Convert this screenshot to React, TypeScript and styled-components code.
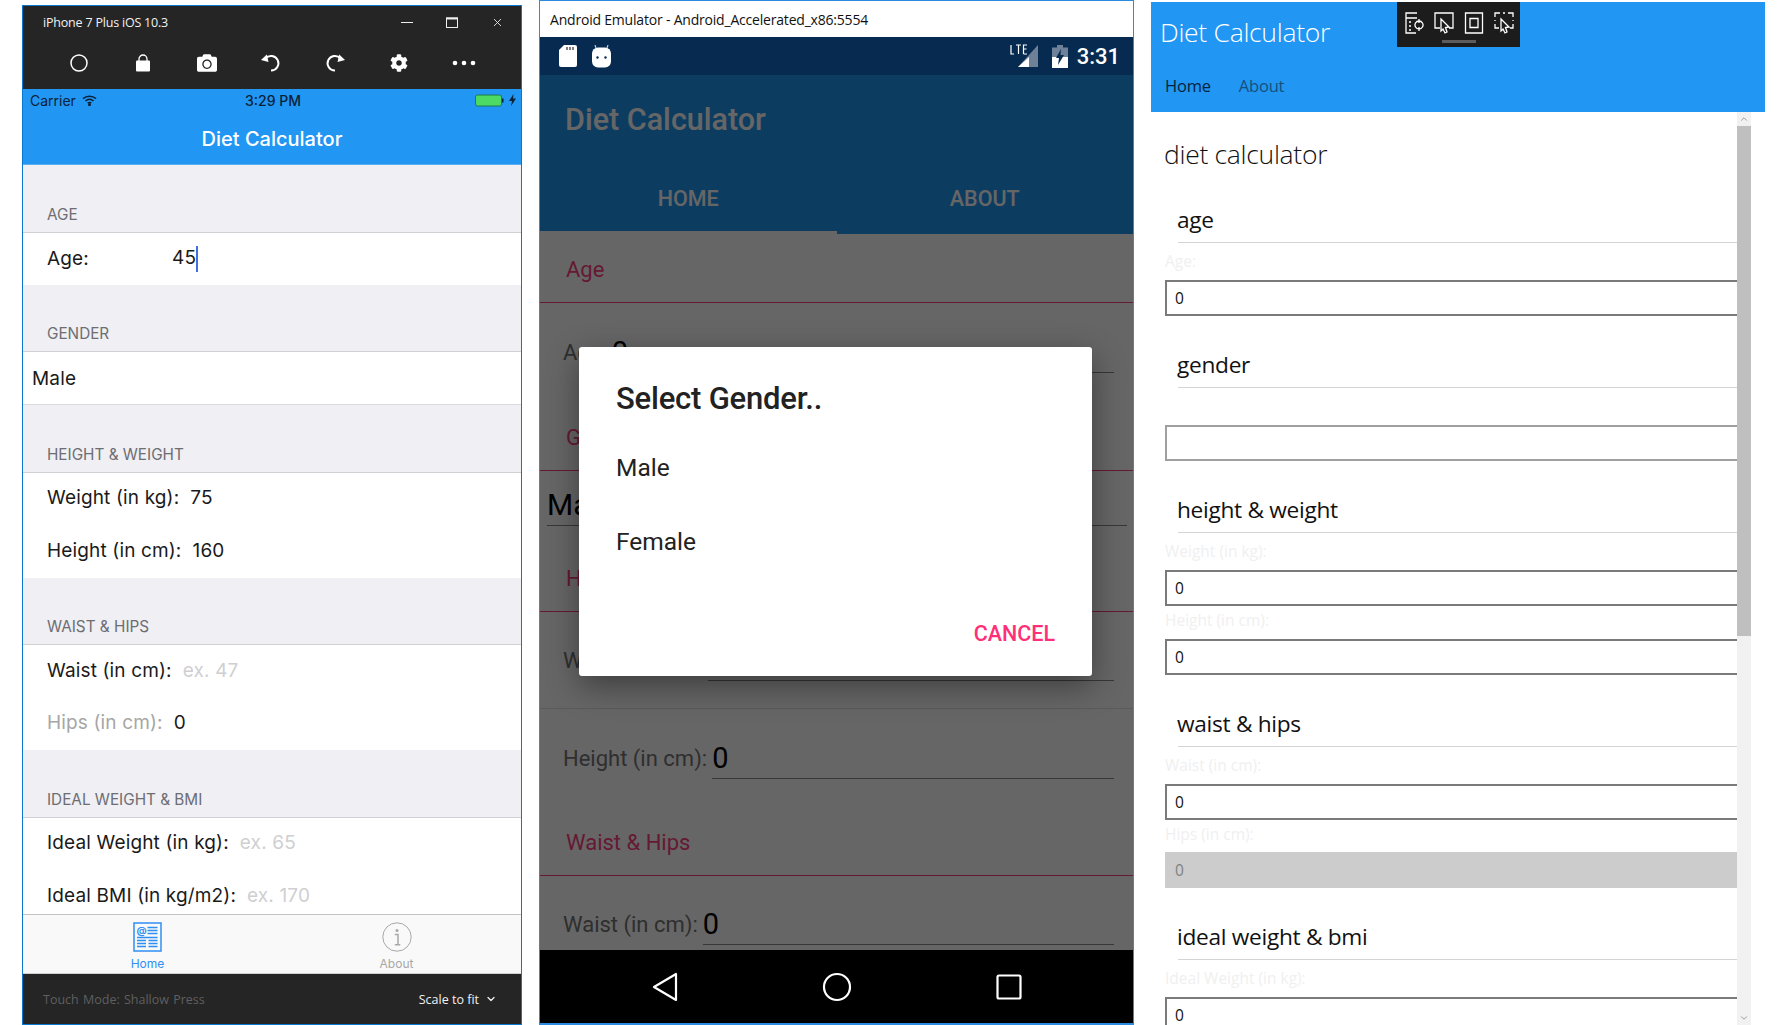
import React from "react";
import styled, { createGlobalStyle } from "styled-components";
import { FaCamera, FaCog } from "react-icons/fa";
import { ChevronDown, ChevronUp, X } from "lucide-react";

const GlobalStyle = createGlobalStyle`
  html, body { margin: 0; padding: 0; background: #fff; }
  * { box-sizing: border-box; }
`;

const Page = styled.div`
  width: 1784px;
  height: 1025px;
  overflow: hidden;
  display: flex;
  padding-left: 22px;
`;

/* ---------- iOS simulator ---------- */
const IosWindow = styled.div`
  width: 500px;
  margin-top: 5px;
  height: 1020px;
  border: 1px solid #0b78d0;
  display: flex;
  flex-direction: column;
  font-family: Inter, "Liberation Sans", sans-serif;
`;
const SimTitle = styled.div`
  background: #252525;
  height: 38px;
  display: flex;
  align-items: center;
  padding: 0 17px 5px 20px;
  color: #f2f2f2;
  font: 12.5px "Open Sans", sans-serif;
`;
const SimTitleText = styled.span`
  flex: 1;
  letter-spacing: -0.2px;
`;
const WinControls = styled.div`
  display: flex;
  align-items: center;
  gap: 33px;
  color: #eee;
`;
const SimTools = styled.div`
  background: #252525;
  height: 45px;
  padding: 0 0 8px 24px;
  display: grid;
  grid-template-columns: repeat(6, 64px) 66px;
  align-items: center;
  justify-items: center;
  color: #fff;
`;
const StatusBar = styled.div`
  background: #2196f3;
  height: 26px;
  display: grid;
  grid-template-columns: 1fr 1fr 1fr;
  align-items: center;
  padding: 0 5px 4px 7px;
  color: #0c2238;
  font-size: 14px;
`;
const StatusLeft = styled.div`
  display: flex;
  align-items: center;
  gap: 6px;
`;
const StatusTime = styled.div`
  text-align: center;
  font-weight: 500;
  font-size: 14px;
`;
const StatusRight = styled.div`
  display: flex;
  justify-content: flex-end;
  align-items: center;
  gap: 4px;
`;
const NavBar = styled.div`
  background: #2196f3;
  height: 50px;
  padding-bottom: 2px;
  display: flex;
  align-items: center;
  justify-content: center;
  color: #fff;
  font-size: 20px;
  font-weight: 500;
  border-bottom: 1px solid #5aaef0;
`;
const IosScroll = styled.div`
  flex: 1;
  min-height: 0;
  overflow: hidden;
  background: #efeff4;
`;
const IosHeader = styled.div`
  height: 67.5px;
  display: flex;
  align-items: flex-end;
  padding: 0 0 8px 24px;
  color: #6d6d72;
  font-size: 15.3px;
  border-bottom: 1px solid #d0d0d4;
`;
const IosRows = styled.div<{ $line?: boolean }>`
  background: #fff;
  border-bottom: ${(p) => (p.$line ? "1px solid #dcdce0" : "0")};
`;
const IosRow = styled.div<{ $h?: number; $inset?: number }>`
  height: ${(p) => p.$h ?? 52}px;
  display: flex;
  align-items: center;
  gap: 11px;
  padding-left: ${(p) => p.$inset ?? 24}px;
  padding-bottom: ${(p) => (p.$h ? 2 : 0)}px;
  font-size: 19px;
  letter-spacing: 0.15px;
  color: #1a1a1a;
`;
const IosLabel = styled.span<{ $w?: number; $muted?: boolean }>`
  width: ${(p) => (p.$w ? `${p.$w}px` : "auto")};
  color: ${(p) => (p.$muted ? "#a6a6a6" : "inherit")};
`;
const Placeholder = styled.span`
  color: #cfcfd2;
`;
const Caret = styled.span`
  display: inline-block;
  width: 2px;
  height: 26px;
  background: #3f6fe0;
  vertical-align: middle;
`;
const TabBar = styled.div`
  flex: none;
  height: 60px;
  background: #f9f9f9;
  border-top: 1px solid #c4c4c4;
  border-bottom: 1px solid #cfcfcf;
  display: grid;
  grid-template-columns: 1fr 1fr;
`;
const TabItem = styled.div<{ $active?: boolean }>`
  display: flex;
  flex-direction: column;
  align-items: center;
  padding-top: 7px;
  gap: 4px;
  font-size: 12px;
  color: ${(p) => (p.$active ? "#2f8ff5" : "#a8a8a8")};
`;
const SimFooter = styled.div`
  flex: none;
  height: 50px;
  background: #252525;
  display: flex;
  align-items: center;
  padding: 0 24px 0 20px;
  font: 12.5px "Open Sans", sans-serif;
  color: #5f5f5f;
`;
const FooterMode = styled.span`
  flex: 1;
  word-spacing: 1px;
`;
const FooterScale = styled.span`
  display: flex;
  align-items: center;
  gap: 6px;
  color: #f2f2f2;
`;

/* ---------- Android emulator ---------- */
const AndroidWindow = styled.div`
  width: 595px;
  margin-left: 17px;
  height: 1025px;
  border: 1px solid #2a8be0;
  border-bottom-width: 2px;
  display: flex;
  flex-direction: column;
  font-family: Roboto, sans-serif;
`;
const EmuTitle = styled.div`
  height: 36px;
  background: #fff;
  flex: none;
  padding: 0 0 0 10px;
  display: flex;
  align-items: center;
  font: 14px "Open Sans", sans-serif;
  letter-spacing: -0.2px;
  color: #111;
`;
const DroidStatus = styled.div`
  height: 38px;
  flex: none;
  background: #072b50;
  color: #fff;
  display: flex;
  align-items: center;
  padding: 0 13px 0 19px;
  gap: 15px;
`;
const DroidClock = styled.span`
  font-size: 22px;
  font-weight: 500;
  margin-left: -6px;
`;
const Spacer = styled.div`
  flex: 1;
`;
const DroidScreen = styled.div`
  position: relative;
  flex: 1;
  min-height: 0;
  overflow: hidden;
  background: #fff;
`;
const Scrim = styled.div`
  position: absolute;
  inset: 0;
  background: rgba(0, 0, 0, 0.6);
`;
const AppBar = styled.div`
  background: #2196f3;
  height: 159px;
  display: flex;
  flex-direction: column;
`;
const AppTitle = styled.div`
  height: 88px;
  padding: 0 0 0 25px;
  display: flex;
  align-items: center;
  color: #fff;
  font-size: 30.5px;
  font-weight: 500;
`;
const AppTabs = styled.div`
  flex: 1;
  display: grid;
  grid-template-columns: 1fr 1fr;
`;
const AppTab = styled.div<{ $active?: boolean }>`
  display: flex;
  align-items: center;
  justify-content: center;
  padding-top: ${(p) => (p.$active ? 3 : 0)}px;
  color: #fff;
  font-size: 21.5px;
  font-weight: 500;
  border-bottom: ${(p) => (p.$active ? "3px solid #fff" : "0")};
`;
const DroidLabel = styled.div<{ $h: number }>`
  height: ${(p) => p.$h}px;
  display: flex;
  align-items: flex-end;
  padding: 0 0 20px 26px;
  color: #ff4081;
  font-size: 22px;
  border-bottom: 1px solid #ff4081;
`;
const DroidRow = styled.div<{ $h?: number }>`
  height: ${(p) => p.$h ?? 75}px;
  display: flex;
  align-items: flex-end;
  padding: 0 19px 6px 23px;
  color: #757575;
  font-size: 22px;
  gap: 5px;
`;
const DroidRowLabel = styled.span`
  padding-bottom: 8px;
`;
const DroidField = styled.div<{ $size?: number }>`
  flex: 1;
  border-bottom: 1px solid #8a8a8a;
  color: #000;
  font-size: ${(p) => p.$size ?? 29}px;
  line-height: 38px;
  height: 40px;
`;
const DroidSeparator = styled.div`
  margin-top: 21px;
  height: 1px;
  background: #e0e0e0;
`;
const MaleRow = styled(DroidRow)`
  padding: 0 6px 6px 7px;
`;
const Dialog = styled.div`
  position: absolute;
  left: 39px;
  top: 272px;
  width: 513px;
  height: 329px;
  background: #fff;
  border-radius: 3px;
  box-shadow: 0 10px 32px rgba(0, 0, 0, 0.4);
  padding: 32px 37px 0 37px;
  display: flex;
  flex-direction: column;
  color: #222;
`;
const DialogTitle = styled.div`
  font-size: 31px;
  font-weight: 500;
  height: 38px;
  line-height: 40px;
  letter-spacing: -0.2px;
`;
const DialogOption = styled.div`
  height: 74px;
  display: flex;
  align-items: center;
  font-size: 24.5px;
  position: relative;
  top: 13px;
`;
const DialogActions = styled.div`
  margin-top: auto;
  padding-bottom: 30px;
  text-align: right;
  color: #ff2f78;
  font-size: 21.5px;
  font-weight: 500;
`;
const DroidNav = styled.div`
  height: 73px;
  flex: none;
  background: #000;
  display: grid;
  grid-template-columns: repeat(3, 172px);
  justify-content: center;
  justify-items: center;
  align-items: center;
`;

/* ---------- Windows UWP ---------- */
const UwpWindow = styled.div`
  position: relative;
  width: 614px;
  margin-left: 17px;
  margin-top: 2px;
  height: 1023px;
  display: flex;
  flex-direction: column;
  font-family: "Open Sans", sans-serif;
`;
const UwpHeader = styled.div`
  flex: none;
  height: 110px;
  background: #2196f3;
  padding: 11px 0 0 9px;
`;
const UwpTitle = styled.div`
  color: #fff;
  font-size: 26.5px;
  font-weight: 300;
  line-height: 38px;
  letter-spacing: -0.3px;
`;
const UwpTabs = styled.div`
  display: flex;
  gap: 28px;
  margin-top: 23px;
  padding-left: 5px;
`;
const UwpTab = styled.span<{ $active?: boolean }>`
  font-size: 16.5px;
  letter-spacing: -0.2px;
  color: ${(p) => (p.$active ? "#06233d" : "#164f7e")};
`;
const DevTools = styled.div`
  position: absolute;
  left: 246px;
  top: 0;
  width: 123px;
  height: 45px;
  background: #1c1c1c;
  padding-top: 9px;
  display: flex;
  flex-direction: column;
  align-items: center;
  gap: 5px;
`;
const DevIcons = styled.div`
  display: flex;
  gap: 10px;
`;
const DevHandle = styled.div`
  width: 34px;
  height: 3px;
  background: #5c5c5c;
`;
const UwpBody = styled.div`
  flex: 1;
  min-height: 0;
  display: flex;
  padding-right: 14px;
`;
const UwpContent = styled.div`
  flex: 1;
  min-width: 0;
  overflow: hidden;
  padding-left: 14px;
`;
const UwpPageTitle = styled.div`
  height: 59px;
  padding-top: 24px;
  margin-left: -1px;
  font-size: 26.5px;
  font-weight: 300;
  line-height: 36px;
  color: #111;
  letter-spacing: -0.3px;
`;
const UwpHeading = styled.div`
  height: 72px;
  margin-left: 13px;
  display: flex;
  align-items: flex-end;
  padding: 0 0 7px 0;
  border-bottom: 1px solid #d4d4d4;
  font-size: 22.7px;
  line-height: 30px;
  letter-spacing: -0.3px;
  text-indent: -1px;
  color: #111;
`;
const UwpGap = styled.div`
  height: 37px;
`;
const UwpFieldLabel = styled.div<{ $first?: boolean }>`
  height: ${(p) => (p.$first ? 37 : 32.5)}px;
  padding-top: ${(p) => (p.$first ? 6 : 2)}px;
  line-height: 24px;
  font-size: 15.5px;
  color: #f0f0f0;
`;
const UwpInput = styled.div<{ $disabled?: boolean; $pale?: boolean }>`
  width: calc(100% + 10px);
  height: 36px;
  padding-left: 8px;
  display: flex;
  align-items: center;
  font-size: 15.5px;
  background: ${(p) => (p.$disabled ? "#cccccc" : "#fff")};
  color: ${(p) => (p.$disabled ? "#808080" : "#111")};
  border: 2px solid
    ${(p) => (p.$disabled ? "#cccccc" : p.$pale ? "#a0a0a0" : "#7a7a7a")};
`;
const ScrollTrack = styled.div`
  flex: none;
  width: 14px;
  background: #f1f1f1;
  display: flex;
  flex-direction: column;
  align-items: center;
  color: #8a8a8a;
`;
const ScrollArrow = styled.div`
  flex: none;
  height: 14px;
  display: flex;
  align-items: center;
  justify-content: center;
`;
const ScrollThumb = styled.div`
  flex: none;
  align-self: stretch;
  height: 510px;
  background: #bfbfbf;
`;

const WifiIcon = () => (
  <svg width="15" height="11" viewBox="0 0 15 11" fill="none" stroke="#0c2238" strokeWidth="1.5">
    <path d="M1 3.6C4.7.4 10.3.4 14 3.6" />
    <path d="M3.4 6C5.8 4 9.2 4 11.6 6" />
    <path d="M5.7 8.2C6.8 7.3 8.2 7.3 9.3 8.2" />
    <circle cx="7.5" cy="9.8" r=".7" fill="#0c2238" />
  </svg>
);

const BatteryIcon = () => (
  <svg width="30" height="13" viewBox="0 0 30 13">
    <rect x=".5" y="1" width="26" height="11" rx="2" fill="#4cd964" stroke="#1f7a50" />
    <rect x="27" y="4.5" width="1.5" height="4" fill="#0c2238" />
  </svg>
);

const BoltIcon = () => (
  <svg width="7" height="12" viewBox="0 0 7 12">
    <path d="M4.5 0 0 7h3l-1 5 5-7.500H4z" fill="#0c2238" />
  </svg>
);

const LockIcon = () => (
  <svg width="16" height="18" viewBox="0 0 16 18" fill="none">
    <path d="M4 7V5a4 4 0 0 1 8 0v2" stroke="#fff" strokeWidth="1.300" />
    <rect x="1" y="6.500" width="14" height="11" rx="1" fill="#fff" />
  </svg>
);

// the simulator's rotate icons: an open ring with a solid arrow head
const RotateIcon = ({ flip }: { flip?: boolean }) => (
  <svg width="20" height="20" viewBox="0 0 20 20" fill="none" style={flip ? { transform: "scaleX(-1)" } : undefined}>
    <path d="M4.500 5.500A7.300 7.300 0 1 1 10 17.500" stroke="#fff" strokeWidth="2" />
    <path d="M0 7 5.800 1.500 7.500 9z" fill="#fff" />
  </svg>
);

const HomeTabIcon = () => (
  <svg width="29" height="30" viewBox="0 0 29 30" fill="none" stroke="#2f8ff5">
    <rect x="1" y="1" width="27" height="28" strokeWidth="1.500" />
    <text x="3.500" y="12" fontSize="10" fill="#2f8ff5" stroke="none" fontFamily="Inter, sans-serif" fontWeight="700">
      @
    </text>
    <path d="M14.500 5.500h10M14.500 8.500h10M14.500 11.500h10M4 15.500h20.500M4 18.500h9M15.500 18.500h9M4 21.500h9M15.500 21.500h9M4 24.500h9M15.500 24.500h9" strokeWidth="1.300" />
  </svg>
);

const AboutTabIcon = () => (
  <svg width="30" height="30" viewBox="0 0 30 30" fill="none" stroke="#a8a8a8">
    <circle cx="15" cy="15" r="14.200" strokeWidth="1" />
    <circle cx="15" cy="8.500" r="1.500" fill="#a8a8a8" stroke="none" />
    <path d="M12.800 12.500H16v10M12.800 22.700h5.500" strokeWidth="1.500" />
  </svg>
);

const SdIcon = () => (
  <svg width="18" height="22" viewBox="0 0 18 22">
    <path d="M5 0h11a2 2 0 0 1 2 2v18a2 2 0 0 1-2 2H2a2 2 0 0 1-2-2V5z" fill="#fff" />
    <path d="M8 2v3M11 2v3M14 2v3" stroke="#555" strokeWidth="1.500" />
  </svg>
);

const BotIcon = () => (
  <svg width="19" height="23" viewBox="0 0 19 23">
    <path d="M4 3 3 0M15 3l1-3" stroke="#ccc" strokeWidth="1.200" />
    <rect y="2.500" width="19" height="20" rx="6" fill="#fff" />
    <circle cx="5.500" cy="12.500" r="1.200" fill="#072b50" />
    <circle cx="13.500" cy="12.500" r="1.200" fill="#072b50" />
  </svg>
);

const LteIcon = () => (
  <svg width="29" height="24" viewBox="0 0 29 24">
    <path d="M28 1v22H8z" fill="#6f8199" />
    <path d="M19 13v10H8z" fill="#fff" />
    <path d="M1 1v9h3M6 1h5M8.500 1v9M13.500 10V1h3.500M13.500 5h3M13.500 10h3.500" stroke="#fff" strokeWidth="1.200" fill="none" />
  </svg>
);

const ChargeIcon = () => (
  <svg width="16" height="23" viewBox="0 0 16 23" style={{ marginLeft: -2 }}>
    <path d="M5 0h6v2.500h5V23H0V2.500h5z" fill="#6f8199" />
    <path d="M0 12h16v11H0z" fill="#fff" />
    <path d="M9 4 4 13h3l-1 7 6-10H8.500z" fill="#072b50" />
  </svg>
);

const DevIcon = ({ d }: { d: string }) => (
  <svg width="20" height="24" viewBox="0 0 20 24" fill="none" stroke="#fff" strokeWidth="1.300">
    <path d={d} />
  </svg>
);

const IosField = ({ label, value, hint, muted }: { label: string; value?: string; hint?: string; muted?: boolean }) => (
  <IosRow $h={52.5}>
    <IosLabel $muted={muted}>{label}</IosLabel>
    {value ? <span>{value}</span> : <Placeholder>{hint}</Placeholder>}
  </IosRow>
);

const UwpField = ({ label, first }: { label: string; first?: boolean }) => (
  <>
    <UwpFieldLabel $first={first}>{label}</UwpFieldLabel>
    <UwpInput>0</UwpInput>
  </>
);

function IosPane() {
  return (
    <IosWindow>
      <SimTitle>
        <SimTitleText>iPhone 7 Plus iOS 10.3</SimTitleText>
        <WinControls>
          <svg width="12" height="2"><rect width="12" height="1" fill="#eee" /></svg>
          <svg width="12" height="11" fill="none" stroke="#eee"><rect x=".5" y="1" width="11" height="9.500" /><path d="M0 1.500h12" strokeWidth="2" /></svg>
          <X size={13} strokeWidth={1.6} />
        </WinControls>
      </SimTitle>
      <SimTools>
        <svg width="18" height="18" fill="none" stroke="#fff" strokeWidth="1.500"><circle cx="9" cy="9" r="8" /></svg>
        <LockIcon />
        <FaCamera size={20} />
        <RotateIcon />
        <RotateIcon flip />
        <FaCog size={18} />
        <svg width="24" height="6" fill="#fff"><circle cx="3" cy="3" r="2.300" /><circle cx="12" cy="3" r="2.300" /><circle cx="21" cy="3" r="2.300" /></svg>
      </SimTools>
      <StatusBar>
        <StatusLeft>
          Carrier <WifiIcon />
        </StatusLeft>
        <StatusTime>3:29 PM</StatusTime>
        <StatusRight>
          <BatteryIcon />
          <BoltIcon />
        </StatusRight>
      </StatusBar>
      <NavBar>Diet Calculator</NavBar>
      <IosScroll>
        <IosHeader>AGE</IosHeader>
        <IosRows>
          <IosRow>
            <IosLabel $w={114}>Age:</IosLabel>
            <span>
              45
              <Caret />
            </span>
          </IosRow>
        </IosRows>
        <IosHeader>GENDER</IosHeader>
        <IosRows $line>
          <IosRow $inset={9}>Male</IosRow>
        </IosRows>
        <IosHeader>HEIGHT &amp; WEIGHT</IosHeader>
        <IosRows>
          <IosField label="Weight (in kg):" value="75" />
          <IosField label="Height (in cm):" value="160" />
        </IosRows>
        <IosHeader>WAIST &amp; HIPS</IosHeader>
        <IosRows>
          <IosField label="Waist (in cm):" hint="ex. 47" />
          <IosField label="Hips (in cm):" value="0" muted />
        </IosRows>
        <IosHeader>IDEAL WEIGHT &amp; BMI</IosHeader>
        <IosRows>
          <IosField label="Ideal Weight (in kg):" hint="ex. 65" />
          <IosField label="Ideal BMI (in kg/m2):" hint="ex. 170" />
        </IosRows>
      </IosScroll>
      <TabBar>
        <TabItem $active>
          <HomeTabIcon />
          Home
        </TabItem>
        <TabItem>
          <AboutTabIcon />
          About
        </TabItem>
      </TabBar>
      <SimFooter>
        <FooterMode>Touch Mode: Shallow Press</FooterMode>
        <FooterScale>
          Scale to fit <ChevronDown size={12} strokeWidth={2.500} />
        </FooterScale>
      </SimFooter>
    </IosWindow>
  );
}

function AndroidPane() {
  return (
    <AndroidWindow>
      <EmuTitle>Android Emulator - Android_Accelerated_x86:5554</EmuTitle>
      <DroidStatus>
        <SdIcon />
        <BotIcon />
        <Spacer />
        <LteIcon />
        <ChargeIcon />
        <DroidClock>3:31</DroidClock>
      </DroidStatus>
      <DroidScreen>
        <AppBar>
          <AppTitle>Diet Calculator</AppTitle>
          <AppTabs>
            <AppTab $active>HOME</AppTab>
            <AppTab>ABOUT</AppTab>
          </AppTabs>
        </AppBar>
        <DroidLabel $h={69}>Age</DroidLabel>
        <DroidRow $h={76}>
          <DroidRowLabel>Age:</DroidRowLabel>
          <DroidField>0</DroidField>
        </DroidRow>
        <DroidLabel $h={92}>Gender</DroidLabel>
        <MaleRow $h={61}>
          <DroidField $size={30}>Male</DroidField>
        </MaleRow>
        <DroidLabel $h={80}>Height &amp; Weight</DroidLabel>
        <DroidRow>
          <DroidRowLabel>Weight (in kg):</DroidRowLabel>
          <DroidField>0</DroidField>
        </DroidRow>
        <DroidSeparator />
        <DroidRow $h={76}>
          <DroidRowLabel>Height (in cm):</DroidRowLabel>
          <DroidField>0</DroidField>
        </DroidRow>
        <DroidLabel $h={91}>Waist &amp; Hips</DroidLabel>
        <DroidRow>
          <DroidRowLabel>Waist (in cm):</DroidRowLabel>
          <DroidField>0</DroidField>
        </DroidRow>
        <Scrim />
        <Dialog>
          <DialogTitle>Select Gender..</DialogTitle>
          <DialogOption>Male</DialogOption>
          <DialogOption>Female</DialogOption>
          <DialogActions>CANCEL</DialogActions>
        </Dialog>
      </DroidScreen>
      <DroidNav>
        <svg width="26" height="30" viewBox="0 0 26 30" fill="none" stroke="#fff" strokeWidth="2.200" strokeLinejoin="round"><path d="M24 2v26L2 15z" /></svg>
        <svg width="30" height="30" fill="none" stroke="#fff" strokeWidth="2.200"><circle cx="15" cy="15" r="13" /></svg>
        <svg width="26" height="26" fill="none" stroke="#fff" strokeWidth="2.200"><rect x="1.500" y="1.500" width="23" height="23" rx="1.500" /></svg>
      </DroidNav>
    </AndroidWindow>
  );
}

function UwpPane() {
  return (
    <UwpWindow>
      <UwpHeader>
        <UwpTitle>Diet Calculator</UwpTitle>
        <UwpTabs>
          <UwpTab $active>Home</UwpTab>
          <UwpTab>About</UwpTab>
        </UwpTabs>
      </UwpHeader>
      <DevTools>
        <DevIcons>
          <DevIcon d="M13 2H2v20h10M2 7h11M5 11h2M5 15h2M5 19h2M15 10a4 4 0 1 0 .01 0M15 8v4M15 16v4M11 14h-0M19 14h-0" />
          <DevIcon d="M6 17H1V2h18v15h-4M7 8l8 8-3.500.5L13 21l-2 1-2-4-2 2z" />
          <DevIcon d="M1.500 2h17v20h-17zM6 7.500h8v9H6z" />
          <DevIcon d="M1 6V2h5M14 2h5v4M1 13v4h4M19 13v4h-3M7 8l8 8-3.500.5L13 21l-2 1-2-4-2 2zM9 2h2M1 9v1M19 9v1" />
        </DevIcons>
        <DevHandle />
      </DevTools>
      <UwpBody>
        <UwpContent>
          <UwpPageTitle>diet calculator</UwpPageTitle>
          <UwpHeading>age</UwpHeading>
          <UwpField label="Age:" first />
          <UwpHeading>gender</UwpHeading>
          <UwpGap />
          <UwpInput $pale />
          <UwpHeading>height &amp; weight</UwpHeading>
          <UwpField label="Weight (in kg):" first />
          <UwpField label="Height (in cm):" />
          <UwpHeading>waist &amp; hips</UwpHeading>
          <UwpField label="Waist (in cm):" first />
          <UwpFieldLabel>Hips (in cm):</UwpFieldLabel>
          <UwpInput $disabled>0</UwpInput>
          <UwpHeading>ideal weight &amp; bmi</UwpHeading>
          <UwpField label="Ideal Weight (in kg):" first />
        </UwpContent>
        <ScrollTrack>
          <ScrollArrow>
            <ChevronUp size={10} />
          </ScrollArrow>
          <ScrollThumb />
          <Spacer />
          <ScrollArrow>
            <ChevronDown size={10} />
          </ScrollArrow>
        </ScrollTrack>
      </UwpBody>
    </UwpWindow>
  );
}

export default function App() {
  return (
    <>
      <GlobalStyle />
      <Page>
        <IosPane />
        <AndroidPane />
        <UwpPane />
      </Page>
    </>
  );
}
